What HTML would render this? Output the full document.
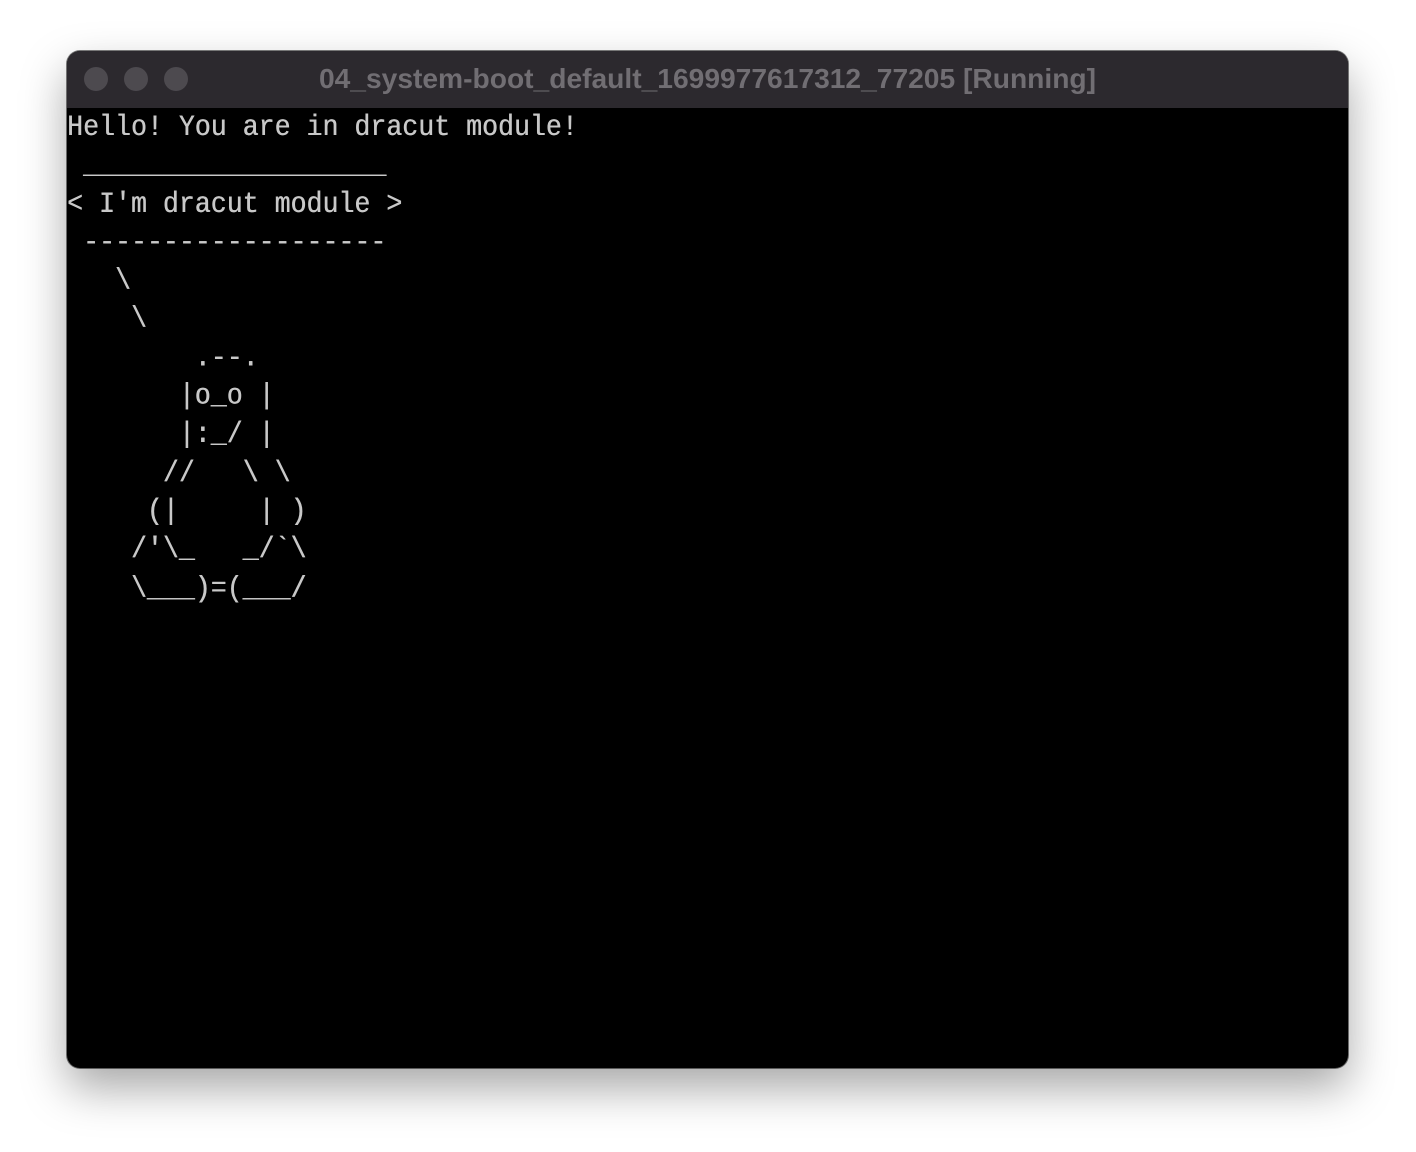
<!DOCTYPE html>
<html><head><style>
html,body{margin:0;padding:0;width:1416px;height:1152px;background:#fff;overflow:hidden}
.win{position:absolute;left:67px;top:51px;width:1281px;height:1017px;border-radius:13px;background:#000;overflow:hidden;box-shadow:0 20px 45px rgba(0,0,0,0.35),0 0 0 1px rgba(0,0,0,0.5)}
.tb{position:absolute;left:0;top:0;width:100%;height:57px;background:#2c292e}
.dot{position:absolute;top:16px;width:24px;height:24px;border-radius:50%;background:#4d4a4f}
.title{position:absolute;left:0;right:0;top:11px;text-align:center;color:#716e73;font:bold 28.2px "Liberation Sans",sans-serif}
pre{position:absolute;left:0;top:57px;margin:0;color:#c8c8c8;font:26.6px/34.3px "Liberation Mono",monospace;transform:scaleY(1.12);transform-origin:0 0;text-shadow:0.4px 0 0 #c8c8c8}
</style></head><body>
<div class="win">
<div class="tb">
<div class="dot" style="left:17px"></div>
<div class="dot" style="left:57px"></div>
<div class="dot" style="left:97px"></div>
<div class="title">04_system-boot_default_1699977617312_77205 [Running]</div>
</div>
<pre>Hello! You are in dracut module!
 ___________________
&lt; I'm dracut module &gt;
 -------------------
   \
    \
        .--.
       |o_o |
       |:_/ |
      //   \ \
     (|     | )
    /'\_   _/`\
    \___)=(___/</pre>
</div>
</body></html>
